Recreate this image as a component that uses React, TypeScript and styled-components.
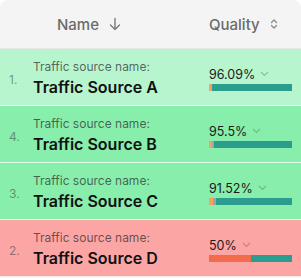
import React from "react";
import styled, { createGlobalStyle } from "styled-components";

const Global = createGlobalStyle`
  html, body { margin: 0; padding: 0; background: #ffffff; }
  body { font-family: Inter, "Noto Sans", sans-serif; }
`;

const Table = styled.div`
  width: 301px;
  display: flex;
  flex-direction: column;
  background: #ffffff;
`;

const Header = styled.div`
  height: 48px;
  display: grid;
  grid-template-columns: 1fr 92px;
  align-items: center;
  background: #f4f4f4;
  border-radius: 8px 8px 0 0;
  border-bottom: 1px solid #e6e6e6;
  color: #6b6b6b;
  font-size: 15px;
  font-weight: 500;
`;

const HeadCell = styled.div<{ $pad: number }>`
  display: flex;
  align-items: center;
  gap: 10px;
  padding-left: ${(p) => p.$pad}px;
`;

const Row = styled.div<{ $bg: string }>`
  height: 56px;
  display: grid;
  grid-template-columns: 1fr 92px;
  align-items: center;
  background: ${(p) => p.$bg};
  border-bottom: 1px solid rgba(255, 255, 255, 0.75);
`;

const NameCell = styled.div`
  display: flex;
  align-items: center;
`;

const Index = styled.div`
  width: 33px;
  box-sizing: border-box;
  padding-left: 9px;
  font-size: 12px;
  color: rgba(60, 60, 60, 0.55);
  padding-top: 4px;
`;

const NameBlock = styled.div`
  display: flex;
  flex-direction: column;
  gap: 3px;
  padding-top: 2px;
`;

const Label = styled.div`
  font-size: 12px;
  color: rgba(40, 40, 40, 0.7);
  line-height: 15px;
`;

const Title = styled.div`
  font-size: 16px;
  font-weight: 600;
  color: #111111;
  line-height: 20px;
`;

const QualityCell = styled.div`
  display: flex;
  flex-direction: column;
  gap: 2px;
  padding-right: 9px;
  padding-top: 3px;
`;

const Value = styled.div`
  display: flex;
  align-items: center;
  gap: 5px;
  font-size: 12.5px;
  color: #1a1a1a;
  line-height: 15px;
`;

const Bar = styled.div`
  display: flex;
  height: 7px;
  width: 83px;
`;

const Seg = styled.div<{ $color: string }>`
  background: ${(p) => p.$color};
  height: 100%;
`;

const Chevron = () => (
  <svg width="9" height="6" viewBox="0 0 9 6" fill="none">
    <path d="M1 1l3.5 3.5L8 1" stroke="rgba(80,80,80,0.35)" strokeWidth="1.2" />
  </svg>
);

const ArrowDown = () => (
  <svg width="12" height="14" viewBox="0 0 12 14" fill="none">
    <path d="M6 1.5v11M1.5 8l4.5 4.5L10.5 8" stroke="#7a7a7a" strokeWidth="1.4" strokeLinecap="round" strokeLinejoin="round" />
  </svg>
);

const SortIcon = () => (
  <svg width="8" height="12" viewBox="0 0 8 12" fill="none">
    <path d="M1.5 4.5L4 2l2.5 2.5M1.5 7.5L4 10l2.5-2.5" stroke="#8a8a8a" strokeWidth="1.3" strokeLinecap="round" strokeLinejoin="round" />
  </svg>
);

type Item = {
  idx: string;
  name: string;
  value: string;
  bg: string;
  segs: { w: number; c: string }[];
};

const items: Item[] = [
  { idx: "1.", name: "Traffic Source A", value: "96.09%", bg: "#b7f5cf", segs: [{ w: 3.5, c: "#f4a261" }, { w: 96.5, c: "#2a9d8f" }] },
  { idx: "4.", name: "Traffic Source B", value: "95.5%", bg: "#87eeac", segs: [{ w: 3.5, c: "#f4a261" }, { w: 3, c: "#a3a3a3" }, { w: 93.5, c: "#2a9d8f" }] },
  { idx: "3.", name: "Traffic Source C", value: "91.52%", bg: "#87eeac", segs: [{ w: 5, c: "#f4a261" }, { w: 4, c: "#a3a3a3" }, { w: 91, c: "#2a9d8f" }] },
  { idx: "2.", name: "Traffic Source D", value: "50%", bg: "#fca5a5", segs: [{ w: 50, c: "#f26b4a" }, { w: 50, c: "#2a9d8f" }] },
];

export default function App() {
  return (
    <>
      <Global />
      <Table>
        <Header>
          <HeadCell $pad={57}>
            Name <ArrowDown />
          </HeadCell>
          <HeadCell $pad={0}>
            Quality <SortIcon />
          </HeadCell>
        </Header>
        {items.map((it) => (
          <Row key={it.name} $bg={it.bg}>
            <NameCell>
              <Index>{it.idx}</Index>
              <NameBlock>
                <Label>Traffic source name:</Label>
                <Title>{it.name}</Title>
              </NameBlock>
            </NameCell>
            <QualityCell>
              <Value>
                {it.value} <Chevron />
              </Value>
              <Bar>
                {it.segs.map((s, i) => (
                  <Seg key={i} $color={s.c} style={{ width: `${s.w}%` }} />
                ))}
              </Bar>
            </QualityCell>
          </Row>
        ))}
      </Table>
    </>
  );
}
